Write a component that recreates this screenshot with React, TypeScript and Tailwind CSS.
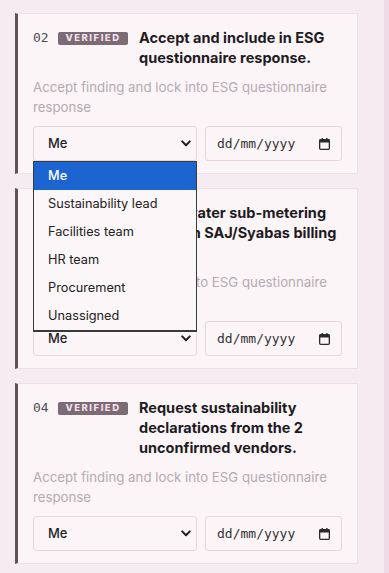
import React from "react";

const font = { fontFamily: "Inter, 'Noto Sans', sans-serif" };
const mono = { fontFamily: "'DejaVu Sans Mono', 'Liberation Mono', monospace" };

function Chevron() {
  return (
    <svg width="10" height="7" viewBox="0 0 10 7" className="block">
      <path d="M1.2 1.4 L5 5.2 L8.8 1.4" fill="none" stroke="#1f1f1f" strokeWidth="2" strokeLinecap="round" strokeLinejoin="round" />
    </svg>
  );
}

function CalIcon() {
  return (
    <svg width="11" height="12" viewBox="0 0 11 12" className="block">
      <rect x="0.65" y="1.65" width="9.7" height="9.7" rx="1" fill="none" stroke="#2a2a2a" strokeWidth="1.3" />
      <rect x="0.5" y="1.5" width="10" height="3" fill="#2a2a2a" />
      <rect x="2.5" y="0" width="1.4" height="2.5" fill="#2a2a2a" />
      <rect x="7.1" y="0" width="1.4" height="2.5" fill="#2a2a2a" />
    </svg>
  );
}

const options = ["Me", "Sustainability lead", "Facilities team", "HR team", "Procurement", "Unassigned"];

function Card({ num, title, open }: { num: string; title: string; open?: boolean }) {
  return (
    <div className="border border-[#ecdfe6] border-l-[3px] border-l-[#5f5059] bg-[#fbf5f8] pl-[15px] pr-[15px] pt-[14px] pb-[12px]">
      <div className="flex items-start">
        <div className="h-[20px] flex items-center text-[13px] text-[#4f4c52] w-[25px] shrink-0" style={mono}>
          {num}
        </div>
        <div className="h-[20px] flex items-center shrink-0">
          <span className="h-[13px] w-[70px] bg-[#7c6a75] rounded-[2px] text-[#f1dfe9] text-[9.5px] font-extrabold tracking-[1.5px] flex items-center justify-center leading-none">
            VERIFIED
          </span>
        </div>
        <div className="ml-[11px] text-[14.5px] leading-[20px] font-bold text-[#1e1b1f] flex-1">{title}</div>
      </div>
      <div className="mt-[9px] text-[13.25px] leading-[20px] text-[#b4aab0]">
        Accept finding and lock into ESG questionnaire response
      </div>
      <div className="mt-[9px] flex gap-[8px]">
        <div className="relative w-[164px]">
          <div className="h-[35px] w-full border border-[#e5d6dd] rounded-[3px] bg-[#fbf5f8] flex items-center justify-between pl-[14px] pr-[5px]">
            <span className="text-[13px] font-medium text-[#1f1f1f]">Me</span>
            <Chevron />
          </div>
          {open && (
            <div className="absolute left-0 top-full w-full z-10 bg-[#fbf6f8] border border-[#3a3a3a] border-b-2">
              {options.map((o, i) => (
                <div
                  key={o}
                  className={
                    i === 0
                      ? "h-[28px] flex items-center pl-[14px] text-[12.75px] font-medium text-white bg-[#1c64d0]"
                      : "h-[28px] flex items-center pl-[14px] text-[12.75px] text-[#222]"
                  }
                >
                  {o}
                </div>
              ))}
            </div>
          )}
        </div>
        <div className="h-[35px] w-[137px] border border-[#e5d6dd] rounded-[3px] bg-[#fbf5f8] flex items-center justify-between pl-[11px] pr-[11px]">
          <span className="text-[13px] text-[#333]" style={mono}>dd/mm/yyyy</span>
          <CalIcon />
        </div>
      </div>
    </div>
  );
}

export default function App() {
  return (
    <div className="min-h-screen w-full bg-[#f6ebf1] flex" style={font}>
      <div className="flex-1 pl-[15px] pt-[13px] pb-[8px]">
        <div className="w-[343px] flex flex-col gap-[14px]">
          <Card num="02" title="Accept and include in ESG questionnaire response." open />
          <Card num="03" title="Install water sub-metering between SAJ/Syabas billing zones." />
          <Card num="04" title="Request sustainability declarations from the 2 unconfirmed vendors." />
        </div>
      </div>
      <div className="w-[5px] bg-[#eddae4]" />
    </div>
  );
}
